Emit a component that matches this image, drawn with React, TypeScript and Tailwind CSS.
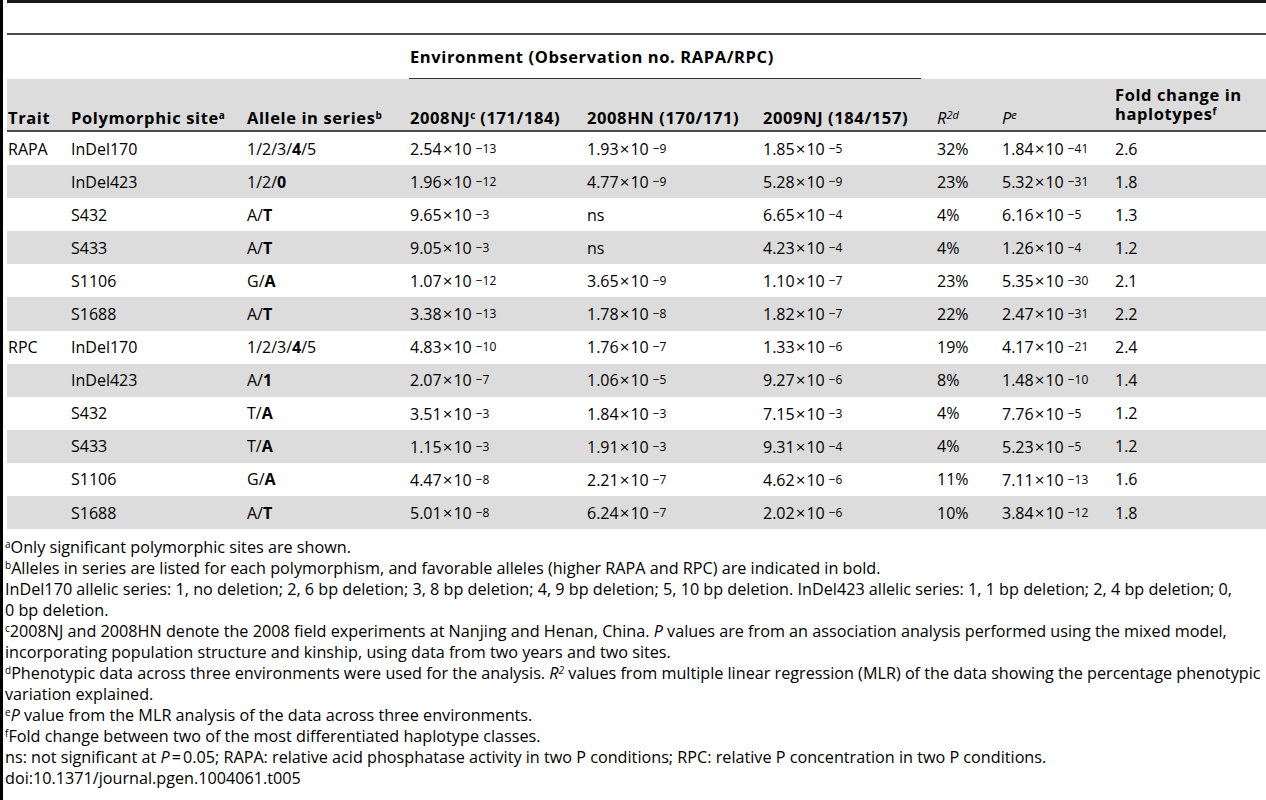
import React from "react";

type Sv = [string, string] | "ns";
type Row = {
  trait: string;
  site: string;
  allele: React.ReactNode;
  nj08: Sv;
  hn08: Sv;
  nj09: Sv;
  r2: string;
  p: [string, string];
  fold: string;
};

const B = ({ children }: { children: React.ReactNode }) => <b className="font-bold">{children}</b>;

const rows: Row[] = [
  { trait: "RAPA", site: "InDel170", allele: <>1/2/3/<B>4</B>/5</>, nj08: ["2.54", "13"], hn08: ["1.93", "9"], nj09: ["1.85", "5"], r2: "32%", p: ["1.84", "41"], fold: "2.6" },
  { trait: "", site: "InDel423", allele: <>1/2/<B>0</B></>, nj08: ["1.96", "12"], hn08: ["4.77", "9"], nj09: ["5.28", "9"], r2: "23%", p: ["5.32", "31"], fold: "1.8" },
  { trait: "", site: "S432", allele: <>A/<B>T</B></>, nj08: ["9.65", "3"], hn08: "ns", nj09: ["6.65", "4"], r2: "4%", p: ["6.16", "5"], fold: "1.3" },
  { trait: "", site: "S433", allele: <>A/<B>T</B></>, nj08: ["9.05", "3"], hn08: "ns", nj09: ["4.23", "4"], r2: "4%", p: ["1.26", "4"], fold: "1.2" },
  { trait: "", site: "S1106", allele: <>G/<B>A</B></>, nj08: ["1.07", "12"], hn08: ["3.65", "9"], nj09: ["1.10", "7"], r2: "23%", p: ["5.35", "30"], fold: "2.1" },
  { trait: "", site: "S1688", allele: <>A/<B>T</B></>, nj08: ["3.38", "13"], hn08: ["1.78", "8"], nj09: ["1.82", "7"], r2: "22%", p: ["2.47", "31"], fold: "2.2" },
  { trait: "RPC", site: "InDel170", allele: <>1/2/3/<B>4</B>/5</>, nj08: ["4.83", "10"], hn08: ["1.76", "7"], nj09: ["1.33", "6"], r2: "19%", p: ["4.17", "21"], fold: "2.4" },
  { trait: "", site: "InDel423", allele: <>A/<B>1</B></>, nj08: ["2.07", "7"], hn08: ["1.06", "5"], nj09: ["9.27", "6"], r2: "8%", p: ["1.48", "10"], fold: "1.4" },
  { trait: "", site: "S432", allele: <>T/<B>A</B></>, nj08: ["3.51", "3"], hn08: ["1.84", "3"], nj09: ["7.15", "3"], r2: "4%", p: ["7.76", "5"], fold: "1.2" },
  { trait: "", site: "S433", allele: <>T/<B>A</B></>, nj08: ["1.15", "3"], hn08: ["1.91", "3"], nj09: ["9.31", "4"], r2: "4%", p: ["5.23", "5"], fold: "1.2" },
  { trait: "", site: "S1106", allele: <>G/<B>A</B></>, nj08: ["4.47", "8"], hn08: ["2.21", "7"], nj09: ["4.62", "6"], r2: "11%", p: ["7.11", "13"], fold: "1.6" },
  { trait: "", site: "S1688", allele: <>A/<B>T</B></>, nj08: ["5.01", "8"], hn08: ["6.24", "7"], nj09: ["2.02", "6"], r2: "10%", p: ["3.84", "12"], fold: "1.8" },
];

function Sci({ v }: { v: Sv }) {
  if (v === "ns") return <>ns</>;
  return (
    <span className="whitespace-nowrap">
      {v[0]}
      <span className="mx-[1px] text-[17px]">×</span>10
      <sup className="relative top-[-2px] ml-[4px] text-[12px]">−{v[1]}</sup>
    </span>
  );
}

const grid = "grid grid-cols-[63px_176px_163px_177px_176px_174px_65px_113px_1fr]";

const Sup = ({ children }: { children: React.ReactNode }) => (
  <sup className="text-[10px] font-bold tracking-normal">{children}</sup>
);

const Fs = ({ children }: { children: React.ReactNode }) => (
  <sup className="text-[10px]">{children}</sup>
);

export default function App() {
  return (
    <div className="min-h-[800px] overflow-hidden border-l-[3px] border-black bg-white pl-[4px] font-['Open_Sans',sans-serif] text-[16px] text-black">
      <div className="h-[3px] bg-[#1a1a1a]" />
      <div className="h-[30px]" />
      <div className="h-[2px] bg-[#4a4a4a]" />
      {/* Header row 1 */}
      <div className={`${grid} h-[44px] text-[16.5px] font-bold tracking-[0.6px]`}>
        <div className="col-start-4 col-span-3 mr-[15px] flex items-center border-b border-[#333] pl-[1px] pt-[2px]">
          Environment (Observation no. RAPA/RPC)
        </div>
      </div>
      {/* Header row 2 */}
      <div className={`${grid} h-[51px] items-end bg-[#dcdcdc] pb-[3px] text-[16.5px] font-bold leading-[19px] tracking-[0.6px]`}>
        <div className="pl-[1px]">Trait</div>
        <div className="pl-[1px]">
          Polymorphic site<Sup>a</Sup>
        </div>
        <div className="pl-[1px]">
          Allele in series<Sup>b</Sup>
        </div>
        <div className="pl-[1px] whitespace-nowrap">
          2008NJ<Sup>c</Sup> (171/184)
        </div>
        <div className="pl-[1px] whitespace-nowrap">2008HN (170/171)</div>
        <div className="pl-[1px] whitespace-nowrap">2009NJ (184/157)</div>
        <div className="pl-[1px] font-normal italic tracking-normal">
          R<sup className="text-[11px]">2d</sup>
        </div>
        <div className="pl-[1px] font-normal italic tracking-normal">
          P<sup className="text-[11px]">e</sup>
        </div>
        <div className="mb-[4px] pl-[1px] pr-[10px]">
          Fold change in
          <br />
          haplotypes<Sup>f</Sup>
        </div>
      </div>
      <div className="h-[2px] bg-[#4a4a4a]" />
      {/* Body */}
      <div>
        {rows.map((r, i) => (
          <div
            key={i}
            className={`${grid} h-[33.1px] items-center ${i % 2 === 1 ? "bg-[#dcdcdc]" : "bg-white"}`}
          >
            <div className="pl-[1px]">{r.trait}</div>
            <div className="pl-[1px]">{r.site}</div>
            <div className="pl-[1px]">{r.allele}</div>
            <div className="pl-[1px]">
              <Sci v={r.nj08} />
            </div>
            <div className="pl-[1px]">
              <Sci v={r.hn08} />
            </div>
            <div className="pl-[1px]">
              <Sci v={r.nj09} />
            </div>
            <div className="pl-[1px]">{r.r2}</div>
            <div className="pl-[1px]">
              <Sci v={r.p} />
            </div>
            <div className="pl-[1px]">{r.fold}</div>
          </div>
        ))}
      </div>
      {/* Footnotes */}
      <div className="-ml-[2px] whitespace-nowrap pt-[8px] text-[16.2px] leading-[21px]">
        <div>
          <Fs>a</Fs>Only significant polymorphic sites are shown.
        </div>
        <div>
          <Fs>b</Fs>Alleles in series are listed for each polymorphism, and favorable alleles (higher RAPA and RPC) are indicated in bold.
        </div>
        <div>
          InDel170 allelic series: 1, no deletion; 2, 6 bp deletion; 3, 8 bp deletion; 4, 9 bp deletion; 5, 10 bp deletion. InDel423 allelic series: 1, 1 bp deletion; 2, 4 bp deletion; 0,
          <br />0 bp deletion.
        </div>
        <div>
          <Fs>c</Fs>2008NJ and 2008HN denote the 2008 field experiments at Nanjing and Henan, China. <i>P</i> values are from an association analysis performed using the mixed model,
          <br />
          incorporating population structure and kinship, using data from two years and two sites.
        </div>
        <div>
          <Fs>d</Fs>Phenotypic data across three environments were used for the analysis. <i>R</i>
          <sup className="text-[10px] italic">2</sup> values from multiple linear regression (MLR) of the data showing the percentage phenotypic
          <br />
          variation explained.
        </div>
        <div>
          <Fs>e</Fs>
          <i>P</i> value from the MLR analysis of the data across three environments.
        </div>
        <div>
          <Fs>f</Fs>Fold change between two of the most differentiated haplotype classes.
        </div>
        <div>
          ns: not significant at <i>P</i>
          <span className="mx-[2px]">=</span>0.05; RAPA: relative acid phosphatase activity in two P conditions; RPC: relative P concentration in two P conditions.
        </div>
        <div>doi:10.1371/journal.pgen.1004061.t005</div>
      </div>
    </div>
  );
}
